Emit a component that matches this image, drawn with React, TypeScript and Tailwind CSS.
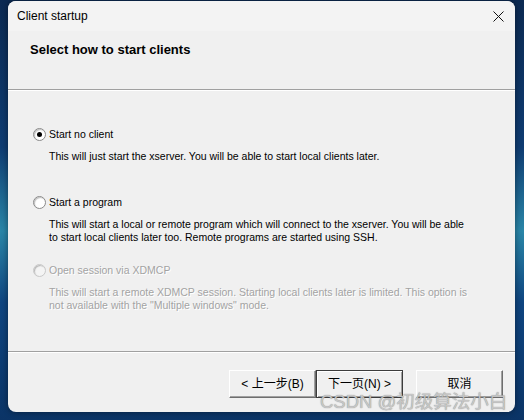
import React from 'react';

const uiFont = { fontFamily: '"Liberation Sans", Arial, sans-serif' };

function Radio({ checked, disabled }: { checked?: boolean; disabled?: boolean }) {
  return (
    <span
      className={`flex h-[13px] w-[13px] shrink-0 items-center justify-center rounded-full border ${
        disabled ? 'border-[#c8c8c8] bg-[#f4f4f4]' : 'border-[#8a8a8a] bg-white'
      } shadow-[inset_1px_1px_1px_rgba(0,0,0,0.25)]`}
    >
      {checked && <span className="h-[5px] w-[5px] rounded-full bg-black" />}
    </span>
  );
}

function Option({
  label,
  lines,
  checked,
  disabled,
}: {
  label: string;
  lines: string[];
  checked?: boolean;
  disabled?: boolean;
}) {
  const tone = disabled
    ? 'text-[#a3a3a3] [text-shadow:1px_1px_0_#ffffff]'
    : 'text-black';
  return (
    <div className={`flex h-[68px] shrink-0 flex-col ${tone}`}>
      <div className="flex items-center gap-[3px]">
        <Radio checked={checked} disabled={disabled} />
        <span className="text-[10.5px] leading-[13px]">{label}</span>
      </div>
      <div className="mt-[9px] pl-[16px] text-[10.5px] leading-[13px]">
        {lines.map((l) => (
          <div key={l}>{l}</div>
        ))}
      </div>
    </div>
  );
}

function Btn({ children, primary }: { children: React.ReactNode; primary?: boolean }) {
  return (
    <button
      className={`flex h-[28px] w-[87px] items-center justify-center bg-[#f0f0f0] text-[12px] text-black ${
        primary
          ? 'border border-[#3c3c3c] shadow-[inset_1px_1px_0_#ffffff,inset_-1px_-1px_0_#a0a0a0]'
          : 'border border-t-white border-l-white border-r-[#6e6e6e] border-b-[#6e6e6e] shadow-[inset_-1px_-1px_0_#a0a0a0]'
      }`}
      style={{ fontFamily: '"Liberation Sans", "Noto Sans CJK SC", sans-serif' }}
    >
      {children}
    </button>
  );
}

export default function App() {
  return (
    <div
      className="relative h-[420px] w-[524px] overflow-hidden bg-[linear-gradient(180deg,#0c2a52_0%,#0f3c72_35%,#2a86a8_55%,#0f4580_72%,#0b3466_100%)]"
      style={uiFont}
    >
      <div className="flex h-full w-full pl-[8px] pr-[9px] pt-[1px]">
        <div className="flex h-[411px] w-[507px] flex-col overflow-hidden rounded-[8px] bg-[#f0f0f0] shadow-[0_0_6px_rgba(0,0,0,0.45)]">
          {/* title bar */}
          <div className="flex h-[30px] shrink-0 items-center justify-between bg-[#f3f3f3] pl-[9px] pr-[10px]">
            <span className="text-[12px] text-black">Client startup</span>
            <svg width="11" height="11" viewBox="0 0 11 11" className="mr-[1px]">
              <path d="M0.5 0.5L10.5 10.5M10.5 0.5L0.5 10.5" stroke="#111" strokeWidth="1" fill="none" />
            </svg>
          </div>

          {/* header */}
          <div className="h-[58px] shrink-0 pl-[22px] pt-[6px]">
            <span className="text-[13px] font-bold text-black">Select how to start clients</span>
          </div>
          <div className="h-px shrink-0 bg-[#a0a0a0]" />
          <div className="h-px shrink-0 bg-white" />

          {/* options */}
          <div className="flex flex-1 flex-col pl-[25px] pt-[37px]">
            <Option
              checked
              label="Start no client"
              lines={['This will just start the xserver. You will be able to start local clients later.']}
            />
            <Option
              label="Start a program"
              lines={[
                'This will start a local or remote program which will connect to the xserver. You will be able',
                'to start local clients later too. Remote programs are started using SSH.',
              ]}
            />
            <Option
              disabled
              label="Open session via XDMCP"
              lines={[
                'This will start a remote XDMCP session. Starting local clients later is limited. This option is',
                'not available with the "Multiple windows" mode.',
              ]}
            />
          </div>

          <div className="h-px shrink-0 bg-[#a0a0a0]" />
          <div className="h-px shrink-0 bg-white" />

          {/* buttons */}
          <div className="flex h-[59px] shrink-0 items-start justify-end pr-[12px] pt-[17px]">
            <Btn>&lt; 上一步(B)</Btn>
            <Btn primary>下一页(N) &gt;</Btn>
            <div className="w-[13px]" />
            <Btn>取消</Btn>
          </div>
        </div>
      </div>

      {/* watermark */}
      <div
        className="absolute left-[320px] top-[391px] text-[18.5px] leading-[22px] text-[#cfcfcf]/90 [text-shadow:0_0_1px_rgba(70,70,70,0.7)]"
        style={{ fontFamily: '"Liberation Sans", "Noto Sans CJK SC", sans-serif' }}
      >
        CSDN @初级算法小白
      </div>
    </div>
  );
}
